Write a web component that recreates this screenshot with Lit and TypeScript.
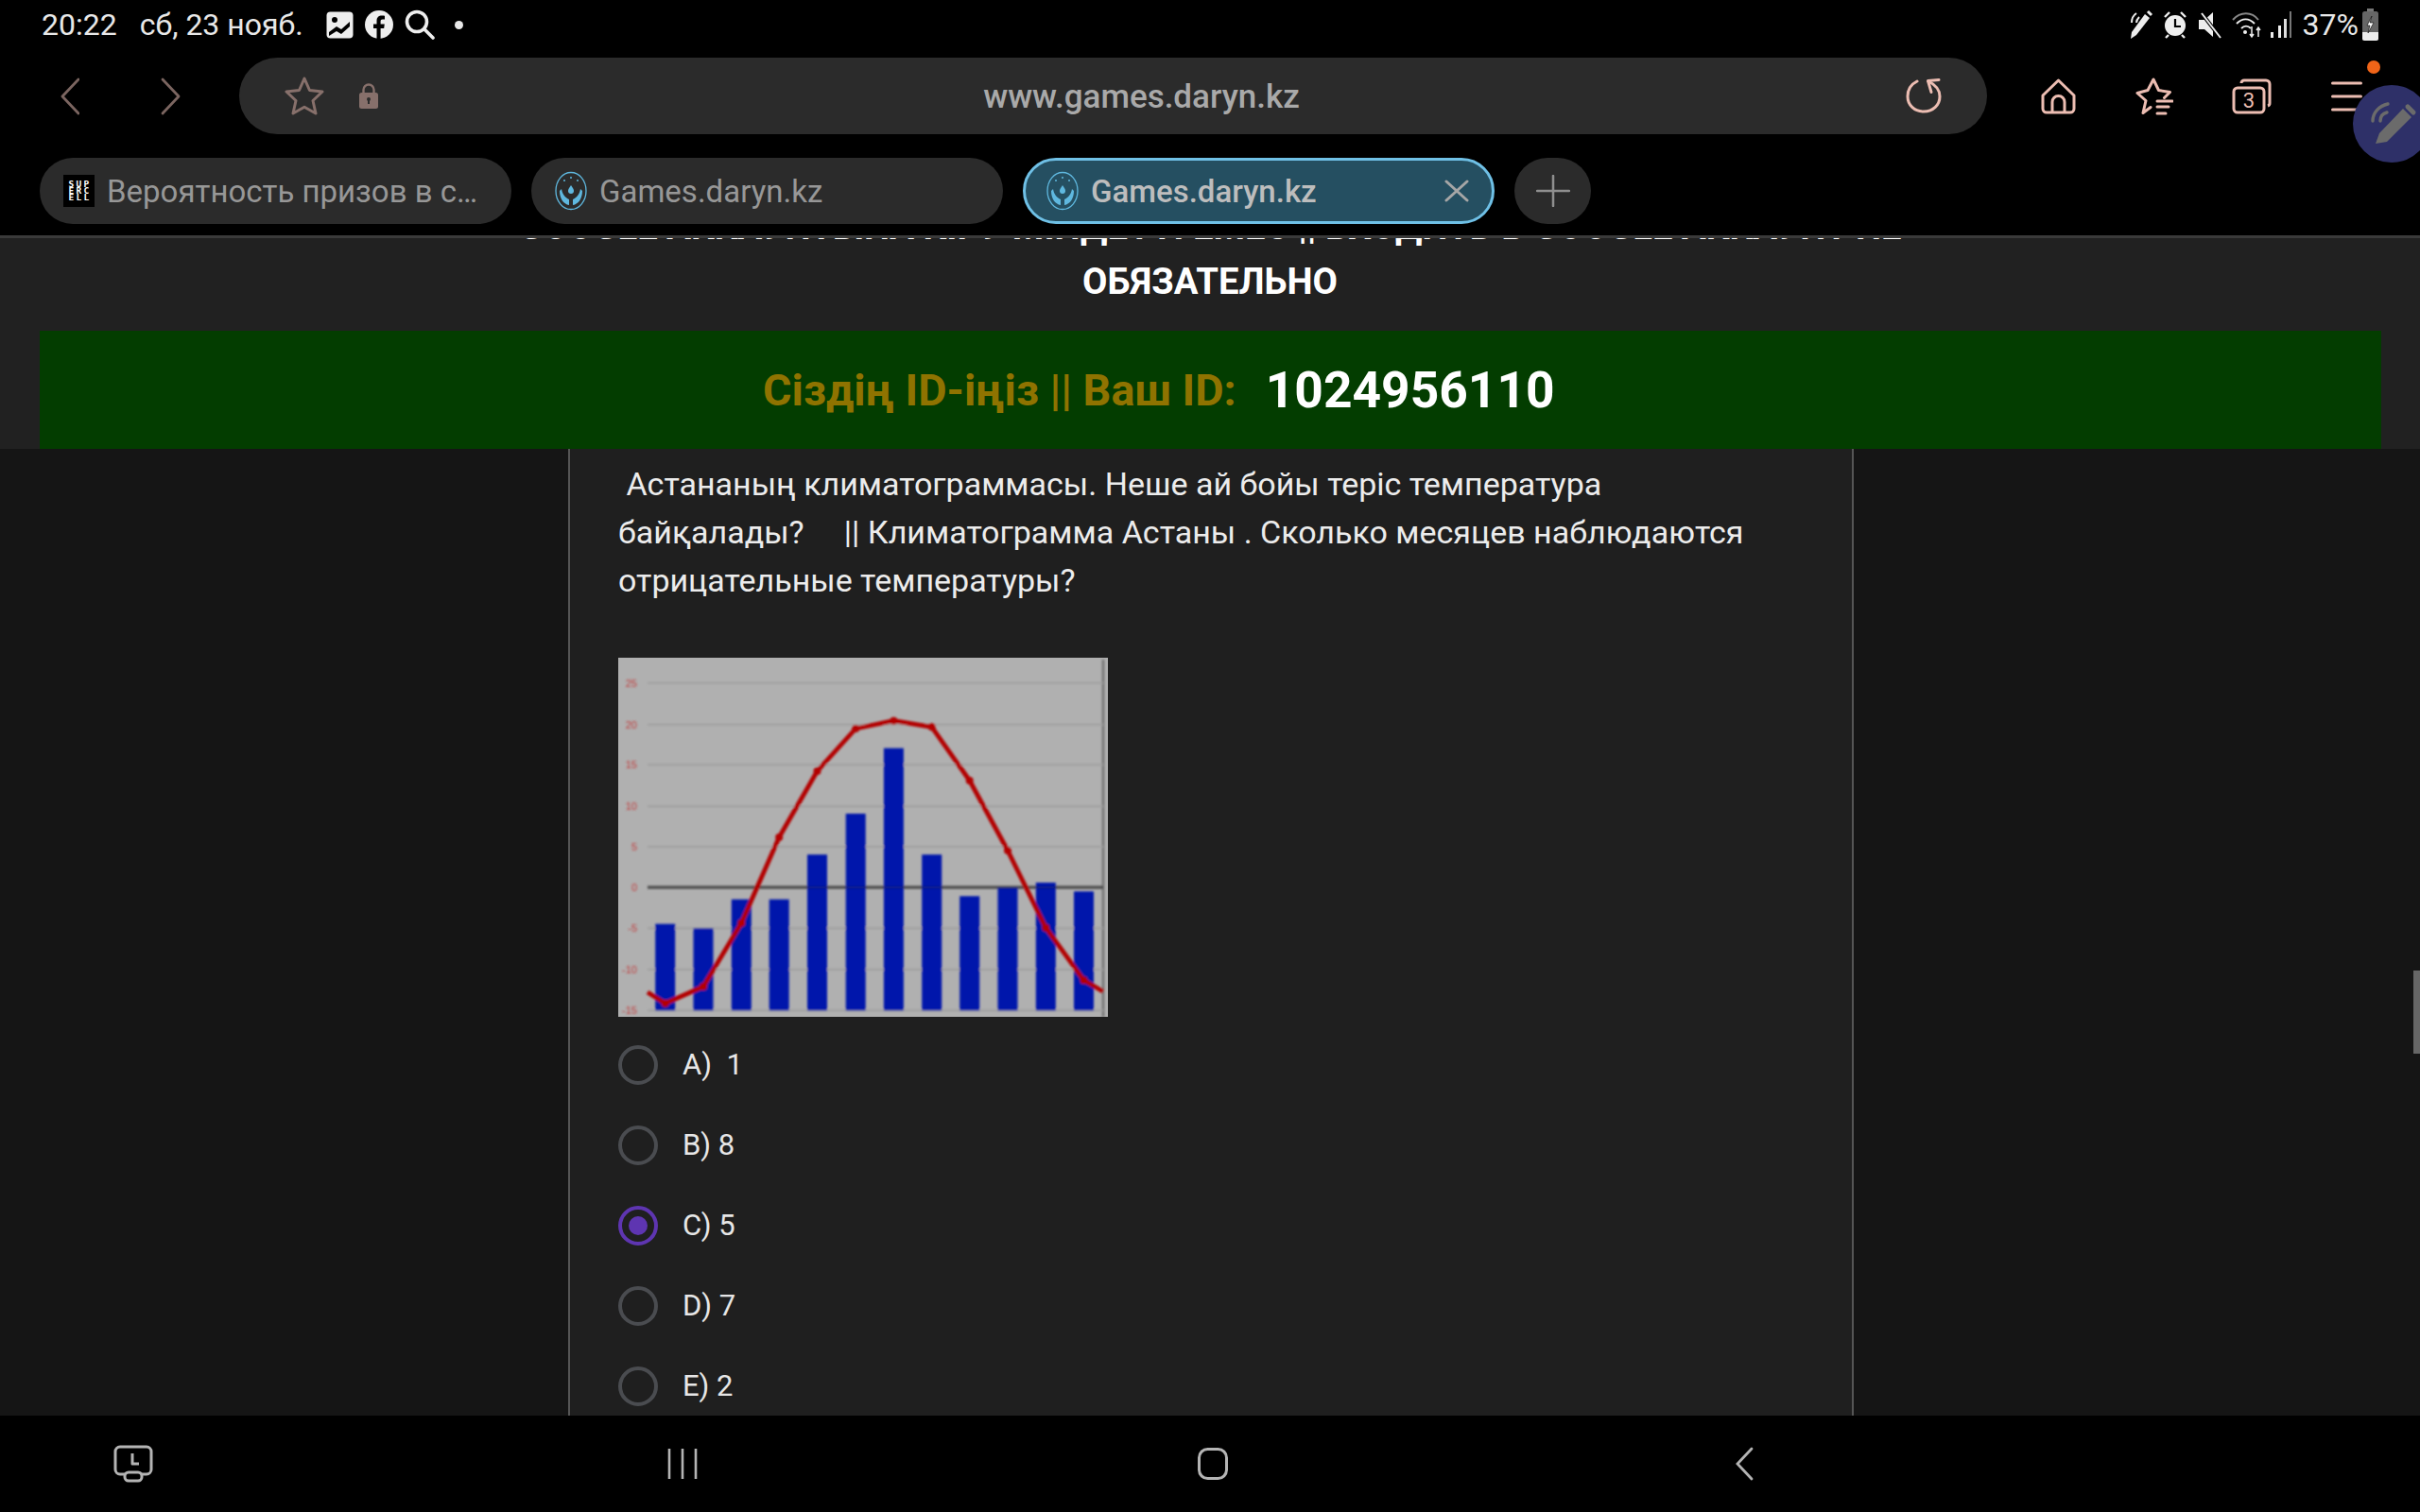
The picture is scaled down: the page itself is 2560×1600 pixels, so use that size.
import { LitElement, html, css, svg } from "lit";
import { customElement } from "lit/decorators.js";

const QUESTION =
  " Астананың климатограммасы. Неше ай бойы теріс температура байқалады?     || Климатограмма Астаны . Сколько месяцев наблюдаются отрицательные температуры?";

const OPTIONS = [
  { label: "A)  1", checked: false },
  { label: "B) 8", checked: false },
  { label: "C) 5", checked: true },
  { label: "D) 7", checked: false },
  { label: "E) 2", checked: false },
];

const GRID = [
  { y: 26.7, t: "25" },
  { y: 70.7, t: "20" },
  { y: 113.3, t: "15" },
  { y: 157.3, t: "10" },
  { y: 200, t: "5" },
  { y: 243, t: "0" },
  { y: 286.3, t: "-5" },
  { y: 330, t: "-10" },
  { y: 373.3, t: "-15" },
];
const BARS: [number, number][] = [
  [49.7, 281.7], [90, 286.3], [130.3, 255.7], [170.2, 255.7], [210.5, 208.3], [251.2, 165],
  [291.4, 95.7], [331.7, 208.3], [371.7, 252.3], [412, 243.3], [452.3, 238], [492.5, 247.3],
];
const LINE: [number, number][] = [
  [31, 354], [49.7, 365.7], [90, 348], [130.3, 280.7], [170.2, 190], [210.5, 120], [251.2, 75],
  [291.4, 66.7], [331.7, 73.3], [371.7, 130], [412, 204], [452.3, 285.7], [492.5, 341.3], [513, 353.3],
];

const favicon = html`<svg class="fav" viewBox="0 0 34 42" aria-hidden="true">
  <ellipse cx="17" cy="21" rx="16" ry="19.5" fill="none" stroke="#5fb8df" stroke-width="1.3" />
  <path d="M17 15c2 3 3 4.500 3 6a3 3 0 0 1-6 0c0-1.500 1-3 3-6z" fill="#5fb8df" />
  <path d="M7 19c1 6 4 9 8 11v6c-6-1-10-7-10-15zM27 19c-1 6-4 9-8 11v6c6-1 10-7 10-15z" fill="#5fb8df" />
  <circle cx="10" cy="10" r="1" fill="#5fb8df" /><circle cx="17" cy="7" r="1" fill="#5fb8df" /><circle cx="24" cy="10" r="1" fill="#5fb8df" />
</svg>`;

@customElement("app-root")
export class AppRoot extends LitElement {
  static styles = css`
    :host {
      display: flex;
      flex-direction: column;
      position: relative;
      width: 2560px;
      height: 1600px;
      overflow: hidden;
      background: #000;
      font-family: Roboto, "Noto Sans", sans-serif;
    }
    svg { display: block; flex: none; }
    .status {
      height: 52px;
      display: flex;
      align-items: center;
      padding: 0 44px;
      color: #e8e8e8;
      font-size: 32px;
      flex: none;
    }
    .date { margin-left: 24px; }
    .status .ic1 { margin-left: 24px; }
    .status .ic2 { margin-left: 12px; }
    .status .dot { width: 9px; height: 9px; border-radius: 50%; background: #e8e8e8; margin-left: 21px; }
    .spacer { flex: 1; }
    .st-right { display: flex; align-items: center; }
    .pct { font-size: 32px; margin: 0 4px 0 12px; }
    .nav { height: 81px; margin-top: 9px; display: flex; align-items: center; flex: none; position: relative; }
    .back { margin-left: 64px; }
    .fwd { margin-left: 86px; }
    .url {
      margin-left: 62px;
      width: 1849px;
      height: 81px;
      border-radius: 41px;
      background: #2b2b2b;
      display: flex;
      align-items: center;
      position: relative;
      flex: none;
    }
    .url .star { margin-left: 48px; }
    .url .lock { margin-left: 37px; }
    .url .addr {
      position: absolute;
      left: 60px;
      right: 0;
      top: 2px;
      bottom: 0;
      display: flex;
      align-items: center;
      justify-content: center;
      color: #a9a9a9;
      font-size: 35px;
      font-weight: 500;
    }
    .url .reload { position: absolute; right: 48px; top: 21px; }
    .tools { display: flex; align-items: center; margin-left: 57px; }
    .tools .t2 { margin-left: 62px; }
    .tools .t3 { margin-left: 62px; }
    .tools .t4 { margin-left: 63px; }
    .tabs { height: 70px; margin-top: 25px; display: flex; align-items: center; gap: 21px; padding-left: 42px; flex: none; }
    .tab {
      width: 499px;
      height: 70px;
      box-sizing: border-box;
      border-radius: 35px;
      background: #2b2b2b;
      display: flex;
      align-items: center;
      padding-left: 25px;
      color: #979797;
      font-size: 33px;
      white-space: nowrap;
      flex: none;
    }
    .tab.active {
      background: #254f61;
      border: 3px solid #6fc0e6;
      padding-left: 22px;
      color: #bdbdbd;
      font-weight: 500;
    }
    .tab .label { padding-top: 1px; }
    .tab .fav { width: 34px; height: 42px; margin-right: 13px; flex: none; }
    .tab .sc {
      width: 33px;
      height: 34px;
      background: #000;
      color: #fff;
      font-family: "DejaVu Sans Mono", monospace;
      font-size: 9.5px;
      line-height: 7px;
      font-weight: 700;
      text-align: center;
      margin-right: 13px;
      padding: 6px 0 0 2px;
      box-sizing: border-box;
      flex: none;
      letter-spacing: 2.3px;
      overflow: hidden;
    }
    .tab .x { margin-left: auto; margin-right: 24px; }
    .plus {
      width: 81px;
      height: 70px;
      border-radius: 35px;
      background: #2b2b2b;
      display: flex;
      align-items: center;
      justify-content: center;
      flex: none;
    }
    .page {
      margin-top: 12px;
      height: 1249px;
      border-top: 3px solid #3a3a3a;
      box-sizing: border-box;
      background: #151515;
      overflow: hidden;
      flex: none;
    }
    .head { background: #212121; height: 223px; overflow: hidden; }
    .head h1 {
      margin: -41px auto 0;
      width: 1560px;
      text-align: center;
      font-size: 38.3px;
      line-height: 58px;
      font-weight: 700;
      color: #fff;
      height: 140px;
    }
    .banner {
      margin: -125px 41px 0 42px;
      height: 125px;
      background: #033d00;
      display: flex;
      align-items: center;
      padding-left: 765px;
      position: relative;
    }
    .banner .lbl { color: #8f7300; font-size: 46.7px; font-weight: 700; }
    .banner .id { color: #fff; font-size: 53.3px; font-weight: 700; margin-left: 31px; }
    .col {
      margin-left: 601px;
      width: 1360px;
      height: 1023px;
      box-sizing: border-box;
      border-left: 2px solid #555;
      border-right: 2px solid #555;
      background: #1f1f1f;
      padding: 12px 0 0 51px;
      color: #ececec;
    }
    .q { max-width: 1200px; font-size: 34px; line-height: 51px; white-space: pre-wrap; }
    .chart { width: 518px; height: 380px; margin-top: 56px; }
    .opts { display: flex; flex-direction: column; margin-top: 8px; }
    .opt { height: 85px; display: flex; align-items: center; font-size: 31px; color: #e6e6e6; white-space: pre; }
    .radio {
      width: 42px;
      height: 42px;
      box-sizing: border-box;
      border-radius: 50%;
      border: 4px solid #4a4c50;
      margin-right: 26px;
      display: flex;
      align-items: center;
      justify-content: center;
      flex: none;
    }
    .radio.on { border-color: #5e35b1; }
    .radio.on::after { content: ""; width: 20px; height: 20px; border-radius: 50%; background: #5e35b1; }
    .bottom { flex: 1; position: relative; display: flex; align-items: center; }
    .bottom .recent { margin-left: 120px; }
    .bottom .bars { margin-left: 544px; }
    .bottom .home { margin-left: 529px; }
    .bottom .bk { margin-left: 537px; }
    .badge { position: absolute; left: 2504px; top: 64px; width: 14px; height: 14px; border-radius: 50%; background: #f06418; }
    .fab {
      position: absolute;
      left: 2489px;
      top: 90px;
      width: 82px;
      height: 82px;
      border-radius: 50%;
      background: #2e3068;
      box-shadow: 0 2px 6px rgba(0, 0, 0, 0.4);
    }
    .thumb { position: absolute; left: 2553px; top: 1027px; width: 7px; height: 88px; background: #666; }
  `;

  private chart() {
    const pts = LINE.map((p) => p.join(",")).join(" ");
    return html`<svg class="chart" viewBox="0 0 518 380" role="img" aria-label="Климатограмма">
      <defs><filter id="b" x="-5%" y="-5%" width="110%" height="110%"><feGaussianBlur stdDeviation="1" /></filter></defs>
      <rect width="518" height="380" fill="#b0b0b0" />
      <g filter="url(#b)">
        <line x1="513" y1="2" x2="513" y2="380" stroke="#6f6f6f" stroke-width="2.400" />
        ${GRID.map(
          (g) => svg`
          <line x1="31" x2="513" y1=${g.y} y2=${g.y} stroke=${g.t === "0" ? "#505050" : "#a0a0a0"} stroke-width=${g.t === "0" ? 3 : 2} />
          <text x="20" y=${g.y + 4} text-anchor="end" font-size="11" fill="#c04040" font-family="Liberation Sans, sans-serif">${g.t}</text>`
        )}
        ${BARS.map(([x, y]) => svg`<rect x=${x - 10.5} y=${y} width="21" height=${373.3 - y} fill="#0019ab" />`)}
        <line x1="31" x2="513" y1="243" y2="243" stroke="#222" stroke-opacity="0.25" stroke-width="2.500" />
        <polyline points=${pts} fill="none" stroke="#b30000" stroke-width="4.800" stroke-linejoin="round" />
        ${LINE.slice(1, -1).map(([x, y]) => svg`<circle cx=${x} cy=${y} r="4" fill="#b30000" />`)}
      </g>
    </svg>`;
  }

  render() {
    const gray = "#7b6560";
    const pink = "#ecbdb2";
    return html`
      <div class="status">
        <span>20:22</span><span class="date">сб, 23 нояб.</span>
        <svg class="ic1" width="29" height="29" viewBox="0 0 29 29"><rect width="28" height="28" x=".5" y=".5" rx="4" fill="#eee" /><circle cx="9" cy="9" r="3" fill="#000" /><path d="M3 22l8-6 5 3 9-8v5l-9 8-5-3-8 5z" fill="#000" /></svg>
        <svg class="ic2" width="30" height="30" viewBox="0 0 30 30"><circle cx="15" cy="15" r="15" fill="#eee" /><path d="M12.500 30V19H9v-4.500h3.500V11c0-3.700 2.200-5.500 5.400-5.500 1.500 0 2.700.2 3.100.3v3.800h-2.200c-1.700 0-2.200.8-2.200 2.100v2.800h4.200l-.6 4.500h-3.600v11z" fill="#000" /></svg>
        <svg class="ic2" width="32" height="32" viewBox="0 0 32 32" fill="none" stroke="#eee" stroke-width="3.600" stroke-linecap="round"><circle cx="13" cy="13" r="10.500" /><path d="M21 21l9 9" /></svg>
        <span class="dot"></span>
        <span class="spacer"></span>
        <span class="st-right">
          <svg width="26" height="32" viewBox="0 0 26 32" fill="none" stroke="#eee"><path d="M22 9L8 27l-6 4 1-7L17 5z" fill="#eee" stroke="none" /><path d="M20 2l4 4" stroke-width="3" /><path d="M3 14c0-4 2-8 5-10M8 14c0-2 1-4 3-6" stroke-width="2" /></svg>
          <svg style="margin-left:11px" width="24" height="30" viewBox="0 0 24 30"><circle cx="12" cy="16" r="11" fill="#eee" /><path d="M12 9v8h6" fill="none" stroke="#000" stroke-width="2.200" /><path d="M1 7l5-5M23 7l-5-5M5 26l-3 3M19 26l3 3" stroke="#eee" stroke-width="2.400" /></svg>
          <svg style="margin-left:13px" width="24" height="30" viewBox="0 0 24 30"><path d="M0 10h6l9-8v26l-9-8H0z" fill="#eee" /><path d="M3 3l20 26" stroke="#000" stroke-width="4" /><path d="M3 3l20 26" stroke="#eee" stroke-width="2" /></svg>
          <svg style="margin-left:11px" width="32" height="30" viewBox="0 0 32 30" fill="none" stroke="#eee" stroke-width="2"><path d="M1 10c8-9 20-9 27 0" stroke="#888" /><path d="M5 14c6-6 13-6 19 0M10 19c3-3 7-3 10 0" /><circle cx="14" cy="23" r="2" fill="#eee" stroke="none" /><path d="M21 17v11M19 25l2 3 2-3M28 28V18M26 21l2-3 2 3" stroke-width="1.500" /></svg>
          <svg style="margin-left:9px" width="22" height="30" viewBox="0 0 22 30"><rect x="0" y="23" width="3" height="6" fill="#eee" /><rect x="8" y="16" width="3" height="13" fill="#eee" /><rect x="14" y="9" width="3" height="20" fill="#ddd" /><rect x="20" y="1" width="2" height="28" fill="#777" /></svg>
          <span class="pct">37%</span>
          <svg width="17" height="34" viewBox="0 0 17 34"><rect x="5" y="0" width="7" height="3" fill="#777" /><rect x="0" y="3" width="17" height="31" rx="2.500" fill="#666" /><path d="M0 25h17v6.500a2.500 2.500 0 0 1-2.500 2.500h-12A2.500 2.500 0 0 1 0 31.500z" fill="#eee" /><path d="M10 8l-5 10h3l-2 8 6-11H8z" fill="#fff" stroke="#000" stroke-width=".6" /></svg>
        </span>
      </div>

      <div class="nav">
        <svg class="back" width="20" height="40" viewBox="0 0 20 40" fill="none" stroke=${gray} stroke-width="2.800" stroke-linecap="round" stroke-linejoin="round"><path d="M19 2L2 20l17 18" /></svg>
        <svg class="fwd" width="21" height="40" viewBox="0 0 21 40" fill="none" stroke=${gray} stroke-width="2.800" stroke-linecap="round" stroke-linejoin="round"><path d="M2 2l17 18L2 38" /></svg>
        <div class="url">
          <svg class="star" width="42" height="41" viewBox="0 0 42 41" fill="none" stroke="#87706b" stroke-width="3" stroke-linejoin="round"><path d="M21 2l5.500 12.500L40 16l-10 9.500L33 39l-12-6.800L9 39l3-13.500L2 16l13.500-1.500z" /></svg>
          <svg class="lock" width="20" height="27" viewBox="0 0 20 27"><rect y="10" width="20" height="17" rx="2.500" fill="#87706b" /><path d="M4.500 11V7a5.500 5.500 0 0 1 11 0v4" fill="none" stroke="#87706b" stroke-width="2.400" /><circle cx="10" cy="17" r="2" fill="#2b2b2b" /><rect x="9" y="17" width="2" height="5" fill="#2b2b2b" /></svg>
          <div class="addr">www.games.daryn.kz</div>
          <svg class="reload" width="38" height="38" viewBox="0 0 38 38" fill="none" stroke=${pink} stroke-width="3" stroke-linecap="round" stroke-linejoin="round"><path d="M12 4C6 7 2 13 2 20c0 9 7 16 17 16s17-7 17-16c0-6-4-12-12-16" /><path d="M35 2.500l-11.500 1 3.500 12" /></svg>
        </div>
        <div class="tools">
          <svg width="37" height="38" viewBox="0 0 37 38" fill="none" stroke=${pink} stroke-width="3" stroke-linejoin="round"><path d="M2 18L18.500 2 35 18v14a4 4 0 0 1-4 4H6a4 4 0 0 1-4-4z" /><path d="M12 36V25a6.500 6.500 0 0 1 13 0v11" /></svg>
          <svg class="t2" width="41" height="40" viewBox="0 0 41 40" fill="none" stroke=${pink} stroke-width="3" stroke-linecap="round" stroke-linejoin="round"><path d="M31.500 21.500l6-6-12-2L20 2l-6 11.500-11 3 9 8-3 13 8-6" /><path d="M24 25h16M24 31h12M24 38h9" /></svg>
          <svg class="t3" width="42" height="38" viewBox="0 0 42 38" fill="none" stroke=${pink} stroke-width="3" stroke-linejoin="round"><rect x="2" y="10" width="32" height="26" rx="4" /><path d="M10 5V5a3 3 0 0 1 3-3h23a4 4 0 0 1 4 4v20a3 3 0 0 1-2 3" /><text x="18" y="31" text-anchor="middle" font-size="22" fill=${pink} stroke="none" font-family="Roboto, sans-serif">3</text></svg>
          <svg class="t4" width="33" height="32" viewBox="0 0 33 32" fill="none" stroke=${pink} stroke-width="3" stroke-linecap="round"><path d="M1.500 2h30M1.500 16h30M1.500 30h30" /></svg>
        </div>
      </div>

      <div class="tabs">
        <div class="tab"><div class="sc">SUP<br />ERC<br />ELL</div><span class="label">Вероятность призов в с…</span></div>
        <div class="tab">${favicon}<span class="label">Games.daryn.kz</span></div>
        <div class="tab active">${favicon}<span class="label">Games.daryn.kz</span>
          <svg class="x" width="26" height="24" viewBox="0 0 26 24" fill="none" stroke="#a6a6a6" stroke-width="3" stroke-linecap="round"><path d="M2 2l22 20M24 2L2 22" /></svg>
        </div>
        <div class="plus"><svg width="36" height="34" viewBox="0 0 36 34" fill="none" stroke="#8f8f8f" stroke-width="2.500" stroke-linecap="round"><path d="M18 1v32M1 17h34" /></svg></div>
      </div>

      <div class="page">
        <div class="head">
          <h1>GOOGLE АККАУНТЫНА КІРУ МІНДЕТТІ ЕМЕС || ВХОДИТЬ В GOOGLE АККАУНТ НЕ ОБЯЗАТЕЛЬНО</h1>
        </div>
        <div class="banner"><span class="lbl">Сіздің ID-іңіз || Ваш ID:</span><span class="id">1024956110</span></div>
        <div class="col">
          <div class="q">${QUESTION}</div>
          ${this.chart()}
          <div class="opts">
            ${OPTIONS.map((o) => html`<div class="opt"><span class="radio ${o.checked ? "on" : ""}"></span>${o.label}</div>`)}
          </div>
        </div>
      </div>

      <div class="bottom">
        <svg class="recent" width="42" height="40" viewBox="0 0 42 40" fill="none" stroke="#b4b4b4" stroke-width="3" stroke-linejoin="round"><path d="M13 31H7a5 5 0 0 1-5-5V7a5 5 0 0 1 5-5h28a5 5 0 0 1 5 5v19a5 5 0 0 1-5 5h-6" /><rect x="12" y="29" width="18" height="9" rx="4" /><path d="M20 9v11h7" /></svg>
        <svg class="bars" width="32" height="34" viewBox="0 0 32 34" stroke="#b4b4b4" stroke-width="2.600"><path d="M2 1v32M16 1v32M30 1v32" /></svg>
        <svg class="home" width="32" height="34" viewBox="0 0 32 34" fill="none" stroke="#b4b4b4" stroke-width="3"><rect x="1.500" y="1.500" width="29" height="31" rx="9" /></svg>
        <svg class="bk" width="19" height="36" viewBox="0 0 19 36" fill="none" stroke="#b4b4b4" stroke-width="2.800" stroke-linecap="round"><path d="M17 2L2 18l15 16" /></svg>
      </div>

      <span class="badge"></span>
      <div class="fab">
        <svg width="82" height="82" viewBox="0 0 82 82" fill="none"><path d="M24 62l4-11 25-26 9 9-26 26z" fill="#6b6b6b" /><path d="M58 23l6 6" stroke="#6b6b6b" stroke-width="5" stroke-linecap="round" /><path d="M21 38c0-9 7-16 16-18M29 38c0-5 3-8 7-9" stroke="#6b6b6b" stroke-width="3.400" stroke-linecap="round" /></svg>
      </div>
      <div class="thumb"></div>
    `;
  }
}
